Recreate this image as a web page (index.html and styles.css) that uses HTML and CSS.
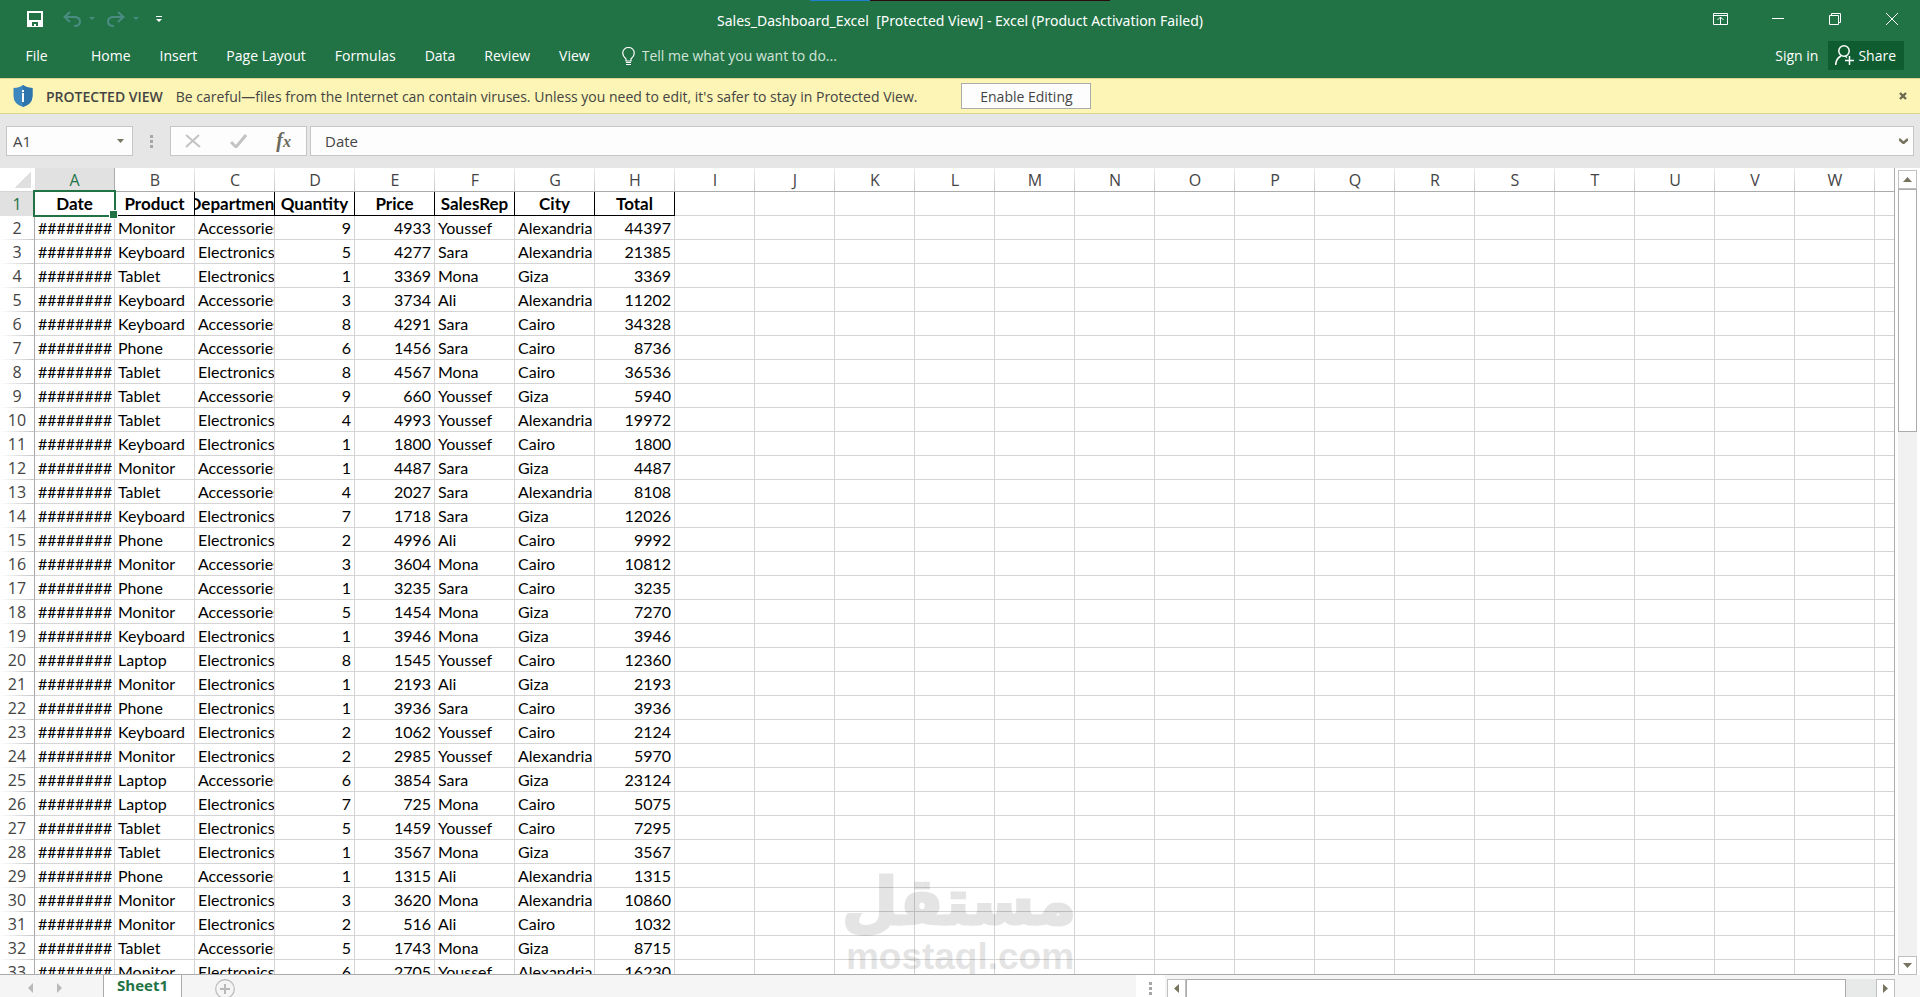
FILE: index.html
```
<!DOCTYPE html>
<html lang="en">
    <head>
        <meta charset="utf-8">
        <title>Sales_Dashboard_Excel</title>
        <link rel="stylesheet" href="styles.css">
    </head>
    <body>
        <header>
            <div id="edge-strip"></div>
            <div id="titlebar">
                <div id="quick-access">
                    <button class="qat" aria-label="Save">
                        <svg width="16" height="16" viewBox="0 0 16 16"><path d="M1 1h14v14H1z" fill="none" stroke="#fff" stroke-width="2"/><path d="M1 9h14v6H1z" fill="#fff"/><path d="M5 11h6v4h-2v-2h-2v2h-2z" fill="#217346"/></svg>
                    </button>
                    <button class="qat undo" aria-label="Undo">
                        <svg width="32" height="16" viewBox="0 0 32 16"><path d="M7 1L1.500 6L7 11M2 6h9q6 0 6 4.500T11 15" fill="none" stroke="#4a8c82" stroke-width="2"/><path d="M26 6h6l-3 3z" fill="#4a8c82"/></svg>
                    </button>
                    <button class="qat redo" aria-label="Redo">
                        <svg width="32" height="16" viewBox="0 0 32 16"><path d="M11 1L16.500 6L11 11M16 6H7q-6 0-6 4.500T7 15" fill="none" stroke="#4a8c82" stroke-width="2"/><path d="M26 6h6l-3 3z" fill="#4a8c82"/></svg>
                    </button>
                    <button class="qat" aria-label="Customize Quick Access Toolbar">
                        <svg width="6" height="8" viewBox="0 0 6 8"><path d="M0 1h6v1H0zM0 4h6L3 7z" fill="#fff"/></svg>
                    </button>
                </div>
                <div id="window-title">Sales_Dashboard_Excel&nbsp; [Protected View] - Excel (Product Activation Failed)</div>
                <div id="window-buttons">
                    <button aria-label="Ribbon Display Options"><svg width="15" height="12" viewBox="0 0 15 12"><path d="M.5.5h14v11H.5zM.5 2.500h14M7.500 11V4M4.500 7l3-3 3 3" fill="none" stroke="#fff"/></svg></button>
                    <button aria-label="Minimize"><svg width="12" height="12" viewBox="0 0 12 12"><path d="M0 5.500h12" stroke="#fff"/></svg></button>
                    <button aria-label="Restore"><svg width="12" height="12" viewBox="0 0 12 12"><path d="M.5 2.500h9v9h-9zM2.500 2.500v-2h9v9h-2" fill="none" stroke="#fff"/></svg></button>
                    <button aria-label="Close"><svg width="12" height="12" viewBox="0 0 12 12"><path d="M0 0l12 12M12 0L0 12" stroke="#fff"/></svg></button>
                </div>
            </div>
            <nav id="ribbon">
                <a href="#" class="file">File</a>
                <a href="#">Home</a>
                <a href="#">Insert</a>
                <a href="#">Page Layout</a>
                <a href="#">Formulas</a>
                <a href="#">Data</a>
                <a href="#">Review</a>
                <a href="#">View</a>
                <label id="tell-me">
                    <svg width="13" height="18" viewBox="0 0 13 18"><path d="M4 14v-2Q.7 9 .7 6a5.800 5.500 0 0 1 11.600 0Q12.300 9 9 12v2z" fill="none" stroke="#fff" stroke-width="1.200"/><path d="M4 15.500h5M4 17.500h5" stroke="#fff"/></svg>
                    <input type="text" placeholder="Tell me what you want to do..." aria-label="Tell me what you want to do">
                </label>
                <a href="#" class="sign-in">Sign in</a>
                <button id="share">
                    <svg width="20" height="21" viewBox="0 0 20 21"><circle cx="9" cy="6" r="5.200" fill="none" stroke="#fff" stroke-width="1.500"/><path d="M.7 20q0-6 5.300-9M12 12.500l-2-1.500M14.500 11v9M10 15.500h9" fill="none" stroke="#fff" stroke-width="1.500"/></svg>
                    Share
                </button>
            </nav>
        </header>

        <div id="protected-view">
            <svg width="20" height="22" viewBox="0 0 20 22"><path d="M10 0q4 3 9.500 3v8q0 8-9.500 11Q.5 19 .5 11V3Q6 3 10 0z" fill="#3c87bd"/><path d="M10 0q4 3 9.500 3v8q0 8-9.500 11z" fill="#2e75ae"/><path d="M9 8h2v9H9zM9 5h2v2H9z" fill="#fff"/></svg>
            <strong>PROTECTED VIEW</strong>
            <span>Be careful—files from the Internet can contain viruses. Unless you need to edit, it's safer to stay in Protected View.</span>
            <button id="enable-editing">Enable Editing</button>
            <button id="close-message" aria-label="Close message"><svg width="8" height="8" viewBox="0 0 8 8"><path d="M1 1l6 6M7 1L1 7" stroke="#6b6853" stroke-width="2.400"/></svg></button>
        </div>

        <div id="formula-bar">
            <div id="name-box" class="box">
                <input type="text" value="A1" aria-label="Name box">
                <svg width="7" height="4" viewBox="0 0 7 4"><path d="M0 0h7L3.500 4z" fill="#77755f"/></svg>
            </div>
            <svg class="dots" width="3" height="13" viewBox="0 0 3 13"><path d="M0 0h3v3H0zM0 5h3v3H0zM0 10h3v3H0z" fill="#a6a6a6"/></svg>
            <div id="formula-buttons" class="box">
                <button aria-label="Cancel"><svg width="16" height="14" viewBox="0 0 16 14"><path d="M1 1l14 12M14 1L1 13" stroke="#c3c3c3" stroke-width="2"/></svg></button>
                <button aria-label="Enter"><svg width="17" height="14" viewBox="0 0 17 14"><path d="M1 8l5 5L16 1" fill="none" stroke="#c3c3c3" stroke-width="3"/></svg></button>
                <button class="fx" aria-label="Insert function">f<small>x</small></button>
            </div>
            <div id="formula" class="box">
                <input type="text" value="Date" aria-label="Formula">
                <svg width="9" height="6" viewBox="0 0 9 6"><path d="M0 1l4.500 4L9 1" fill="none" stroke="#77755f" stroke-width="2.500"/></svg>
            </div>
        </div>

        <main>
            <div id="sheet">
                <table>
                    <thead><tr id="letters"></tr></thead>
                    <tbody id="rows"></tbody>
                </table>
                <div id="selection"></div>
                <div id="watermark">
                    <div lang="ar" dir="rtl" class="arabic">مستقل</div>
                    <div class="latin">mostaql.com</div>
                </div>
            </div>
            <div id="v-scroll">
                <button aria-label="Scroll up"><svg width="9" height="5" viewBox="0 0 9 5"><path d="M0 5h9L4.500 0z" fill="#77755f"/></svg></button>
                <div class="thumb"></div>
                <button class="end" aria-label="Scroll down"><svg width="9" height="5" viewBox="0 0 9 5"><path d="M0 0h9L4.500 5z" fill="#77755f"/></svg></button>
            </div>
        </main>

        <footer>
            <div id="sheet-nav">
                <svg width="5" height="10" viewBox="0 0 5 10"><path d="M5 0v10L0 5z" fill="#b9b9b9"/></svg>
                <svg width="5" height="10" viewBox="0 0 5 10"><path d="M0 0v10l5-5z" fill="#b9b9b9"/></svg>
            </div>
            <button id="sheet-tab">Sheet1</button>
            <button id="new-sheet" aria-label="New sheet"><svg width="20" height="20" viewBox="0 0 20 20"><circle cx="10" cy="10" r="9.300" fill="none" stroke="#b9b9b9" stroke-width="1.200"/><path d="M10 5v10M5 10h10" stroke="#b9b9b9" stroke-width="2"/></svg></button>
            <div id="splitter"><svg class="dots" width="3" height="13" viewBox="0 0 3 13"><path d="M0 0h3v3H0zM0 5h3v3H0zM0 10h3v3H0z" fill="#a6a6a6"/></svg></div>
            <div id="h-scroll">
                <button aria-label="Scroll left"><svg width="5" height="9" viewBox="0 0 5 9"><path d="M5 0v9L0 4.500z" fill="#77755f"/></svg></button>
                <div class="thumb"></div>
                <button class="end" aria-label="Scroll right"><svg width="5" height="9" viewBox="0 0 5 9"><path d="M0 0v9l5-4.500z" fill="#77755f"/></svg></button>
            </div>
        </footer>
        <script src="sheet.js"></script>
    </body>
</html>
```
FILE: styles.css
```
* {
    box-sizing: border-box;
}
body {
    margin: 0;
    height: 100vh;
    display: flex;
    flex-direction: column;
    overflow: hidden;
    background-color: white;
    font-family: "Open Sans", "Noto Sans", sans-serif;
    font-size: 14px;
    color: #444;
}
button, input {
    font: inherit;
    color: inherit;
    background: none;
    border: none;
    padding: 0;
    margin: 0;
}
input {
    min-width: 0;
    outline: none;
}
svg {
    display: block;
    flex: none;
}

/* green header */
header {
    position: relative;
    background-color: #217346;
    color: white;
}
#edge-strip {
    position: absolute;
    top: 0;
    left: 50%;
    width: 300px;
    height: 1px;
    margin-left: -150px;
    background: linear-gradient(to right, #1f7fd0 20%, #2a0a10 20%);
}
#titlebar {
    display: grid;
    grid-template-columns: 1fr auto 1fr;
    align-items: center;
    height: 38px;
}
#quick-access {
    display: flex;
    align-items: center;
    padding-left: 27px;
}
.undo {
    margin-left: 20px;
}
.redo {
    margin: 0 17px 0 12px;
}
#window-title {
    font-family: "Noto Sans", sans-serif;
    white-space: nowrap;
    padding-top: 2px;
}
#window-buttons {
    display: flex;
    justify-content: flex-end;
}
#window-buttons button {
    width: 57px;
    height: 38px;
    display: flex;
    align-items: center;
    justify-content: center;
}
#ribbon {
    display: flex;
    align-items: center;
    height: 40px;
    padding: 0 16px 5px 0;
}
#ribbon a {
    color: white;
    text-decoration: none;
    margin-right: 29px;
}
#ribbon .file {
    width: 73px;
    text-align: center;
    margin-right: 18px;
}
#tell-me {
    display: flex;
    align-items: center;
    gap: 7px;
    flex: 1;
    padding-left: 3px;
}
#tell-me input {
    flex: 1;
}
#tell-me input::placeholder {
    color: #d3e4da;
    opacity: 1;
}
#ribbon .sign-in {
    margin-right: 10px;
}
#share {
    display: flex;
    align-items: center;
    gap: 3px;
    height: 29px;
    padding: 0 8px 0 7px;
    background-color: #0e5c2f;
}

/* yellow message bar */
#protected-view {
    display: flex;
    align-items: center;
    height: 36px;
    padding: 0 13px;
    background-color: #fcf5b5;
    border-top: 1px solid #d9d78d;
    border-bottom: 1px solid #d9d78d;
    white-space: nowrap;
}
#protected-view strong {
    font-weight: 600;
    margin: 0 13px;
}
#enable-editing {
    width: 130px;
    height: 26px;
    margin-left: 44px;
    background-color: #fdfdfd;
    border: 1px solid #ababab;
}
#close-message {
    margin-left: auto;
}

/* name box + formula */
#formula-bar {
    display: flex;
    align-items: center;
    height: 54px;
    padding: 0 6px 0 6px;
    background-color: #e6e6e6;
    font-size: 15px;
}
.box {
    display: flex;
    align-items: center;
    height: 30px;
    background-color: #fdfdfd;
    border: 1px solid #c6c6c6;
}
#name-box {
    width: 127px;
    padding: 0 8px 0 6px;
}
#name-box input, #formula input {
    flex: 1;
}
#formula-bar > .dots {
    margin: 0 17px;
}
#formula-buttons {
    width: 137px;
    justify-content: space-between;
    padding: 0 15px 0 14px;
    margin-right: 3px;
}
#formula-buttons .fx {
    font-family: "Liberation Serif", serif;
    font-style: italic;
    font-weight: bold;
    font-size: 20px;
    line-height: 24px;
    color: #6b6a5c;
}
.fx small {
    font-size: 16px;
}
#formula {
    flex: 1;
    padding: 0 5px 0 14px;
}

/* sheet */
main {
    flex: 1;
    min-height: 0;
    display: flex;
}
#sheet {
    flex: 1;
    position: relative;
    overflow: hidden;
    border-bottom: 1px solid #ababab;
}
table {
    width: 100%;
    table-layout: fixed;
    border-collapse: separate;
    border-spacing: 0;
    border-right: 1px solid #ababab;
}
th, td {
    width: 80px;
    height: 24px;
    padding: 0 3px;
    border-right: 1px solid #d4d4d4;
    border-bottom: 1px solid #d4d4d4;
    overflow: hidden;
    white-space: nowrap;
    line-height: 22px;
    font-family: Lato, "Open Sans", sans-serif;
    font-size: 16px;
    font-weight: normal;
    color: black;
    text-align: left;
}
th:last-child, td:last-child {
    width: auto;
    border-right: none;
}
#letters th, .row-number {
    font-family: "Open Sans", "Noto Sans", sans-serif;
    font-size: 16px;
    color: #444;
    text-align: center;
    padding: 0;
}
#letters th {
    border-right: none;
    border-bottom-color: #ababab;
    background: linear-gradient(#eee, #c6c6c6) right / 1px 100% no-repeat;
}
#letters th:last-child {
    background: none;
}
#letters .corner {
    width: 35px;
    background: linear-gradient(to bottom right, transparent 50%, #dfdfdf 50%) 15px 4px / 16px 16px no-repeat;
    border-bottom-color: #d4d4d4;
}
#letters .active {
    background: #e1e1e1;
    border-right: 1px solid #ababab;
    color: #217346;
}
.row-number {
    border-right-color: #ababab;
    border-bottom: none;
    background: linear-gradient(to right, #fff, #c6c6c6) bottom / 100% 1px no-repeat;
}
#rows .row-number.active {
    background: #e1e1e1;
    color: #217346;
}
.number {
    text-align: right;
}
.heading {
    font-size: 17px;
    font-weight: bold;
    padding: 0;
    border-color: black;
}
.heading div {
    display: flex;
    justify-content: center;
}
#selection {
    position: absolute;
    left: 33px;
    top: 22px;
    width: 83px;
    height: 27px;
    border: 2px solid #217346;
}
#selection::after {
    content: "";
    position: absolute;
    right: -4px;
    bottom: -4px;
    width: 7px;
    height: 7px;
    background-color: #217346;
    border: 1px solid white;
}
#watermark {
    position: absolute;
    left: 844px;
    bottom: -2px;
    width: 232px;
    text-align: center;
    opacity: 0.1;
    color: black;
    font-weight: bold;
}
#watermark .arabic {
    font-family: "DejaVu Sans", sans-serif;
    font-size: 64px;
    line-height: 72px;
    -webkit-text-stroke: 3px black;
}
#watermark .latin {
    font-family: "Liberation Sans", sans-serif;
    font-size: 37px;
    line-height: 38px;
}

/* scrollbars */
#v-scroll {
    display: flex;
    flex-direction: column;
    width: 19px;
    margin: 2px 3px 0 3px;
    background-color: #f1f1f1;
}
#v-scroll button, #h-scroll button {
    display: flex;
    align-items: center;
    justify-content: center;
    flex: none;
    width: 19px;
    height: 19px;
    background-color: white;
    border: 1px solid #c0c0c0;
}
#v-scroll .thumb {
    height: 243px;
    background-color: white;
    border: 1px solid #ababab;
}
#v-scroll .end {
    margin-top: auto;
}

/* bottom bar */
footer {
    display: flex;
    height: 22px;
    background-color: #f5f5f5;
    overflow: hidden;
}
#sheet-nav {
    display: flex;
    gap: 24px;
    width: 103px;
    padding: 8px 0 0 28px;
}
#sheet-tab {
    width: 79px;
    height: 24px;
    padding-bottom: 4px;
    background-color: white;
    border: 1px solid #ababab;
    border-top: none;
    color: #217346;
    font-weight: bold;
    font-size: 15px;
    line-height: 20px;
}
#new-sheet {
    height: 20px;
    margin: 4px auto 0 33px;
}
#splitter {
    width: 29px;
    padding: 7px 0 0 13px;
    background-color: white;
}
#h-scroll {
    display: flex;
    width: 728px;
    height: 22px;
    margin: 4px 25px 0 2px;
    background-color: #e8eaea;
}
#h-scroll .thumb {
    width: 660px;
    background-color: white;
    border: 1px solid #ababab;
}
#h-scroll .end {
    margin-left: auto;
}
```
FILE: sheet.js
```
const headings = ["Date", "Product", "Department", "Quantity", "Price", "SalesRep", "City", "Total"];
const letters = "ABCDEFGHIJKLMNOPQRSTUVW".split("");

// product, department, quantity, price, rep, city
const sales = [
    ["Monitor", "Accessories", 9, 4933, "Youssef", "Alexandria"],
    ["Keyboard", "Electronics", 5, 4277, "Sara", "Alexandria"],
    ["Tablet", "Electronics", 1, 3369, "Mona", "Giza"],
    ["Keyboard", "Accessories", 3, 3734, "Ali", "Alexandria"],
    ["Keyboard", "Accessories", 8, 4291, "Sara", "Cairo"],
    ["Phone", "Accessories", 6, 1456, "Sara", "Cairo"],
    ["Tablet", "Electronics", 8, 4567, "Mona", "Cairo"],
    ["Tablet", "Accessories", 9, 660, "Youssef", "Giza"],
    ["Tablet", "Electronics", 4, 4993, "Youssef", "Alexandria"],
    ["Keyboard", "Electronics", 1, 1800, "Youssef", "Cairo"],
    ["Monitor", "Accessories", 1, 4487, "Sara", "Giza"],
    ["Tablet", "Accessories", 4, 2027, "Sara", "Alexandria"],
    ["Keyboard", "Electronics", 7, 1718, "Sara", "Giza"],
    ["Phone", "Electronics", 2, 4996, "Ali", "Cairo"],
    ["Monitor", "Accessories", 3, 3604, "Mona", "Cairo"],
    ["Phone", "Accessories", 1, 3235, "Sara", "Cairo"],
    ["Monitor", "Accessories", 5, 1454, "Mona", "Giza"],
    ["Keyboard", "Electronics", 1, 3946, "Mona", "Giza"],
    ["Laptop", "Electronics", 8, 1545, "Youssef", "Cairo"],
    ["Monitor", "Electronics", 1, 2193, "Ali", "Giza"],
    ["Phone", "Electronics", 1, 3936, "Sara", "Cairo"],
    ["Keyboard", "Electronics", 2, 1062, "Youssef", "Cairo"],
    ["Monitor", "Electronics", 2, 2985, "Youssef", "Alexandria"],
    ["Laptop", "Accessories", 6, 3854, "Sara", "Giza"],
    ["Laptop", "Electronics", 7, 725, "Mona", "Cairo"],
    ["Tablet", "Electronics", 5, 1459, "Youssef", "Cairo"],
    ["Tablet", "Electronics", 1, 3567, "Mona", "Giza"],
    ["Phone", "Accessories", 1, 1315, "Ali", "Alexandria"],
    ["Monitor", "Electronics", 3, 3620, "Mona", "Alexandria"],
    ["Monitor", "Electronics", 2, 516, "Ali", "Cairo"],
    ["Tablet", "Accessories", 5, 1743, "Mona", "Giza"],
    ["Monitor", "Electronics", 6, 2705, "Youssef", "Alexandria"]
];

// empty cells up to the right edge
const blanks = "<td></td>".repeat(letters.length - headings.length + 1);

document.getElementById("letters").innerHTML = '<th class="corner"></th>'
    + letters.map((l, i) => `<th scope="col"${i == 0 ? ' class="active"' : ""}>${l}</th>`).join("")
    + "<th></th>";

let html = '<tr><th scope="row" class="row-number active">1</th>'
    + headings.map((h) => `<td class="heading"><div>${h}</div></td>`).join("") + blanks + "</tr>";

sales.forEach((sale, i) => {
    // the date column is too narrow, so it shows hashes
    let cells = ["########", ...sale, sale[2] * sale[3]];
    html += `<tr><th scope="row" class="row-number">${i + 2}</th>`
        + cells.map((c, n) => `<td${typeof c == "number" || n == 0 ? ' class="number"' : ""}>${c}</td>`).join("")
        + blanks + "</tr>";
});
document.getElementById("rows").innerHTML = html;
```
